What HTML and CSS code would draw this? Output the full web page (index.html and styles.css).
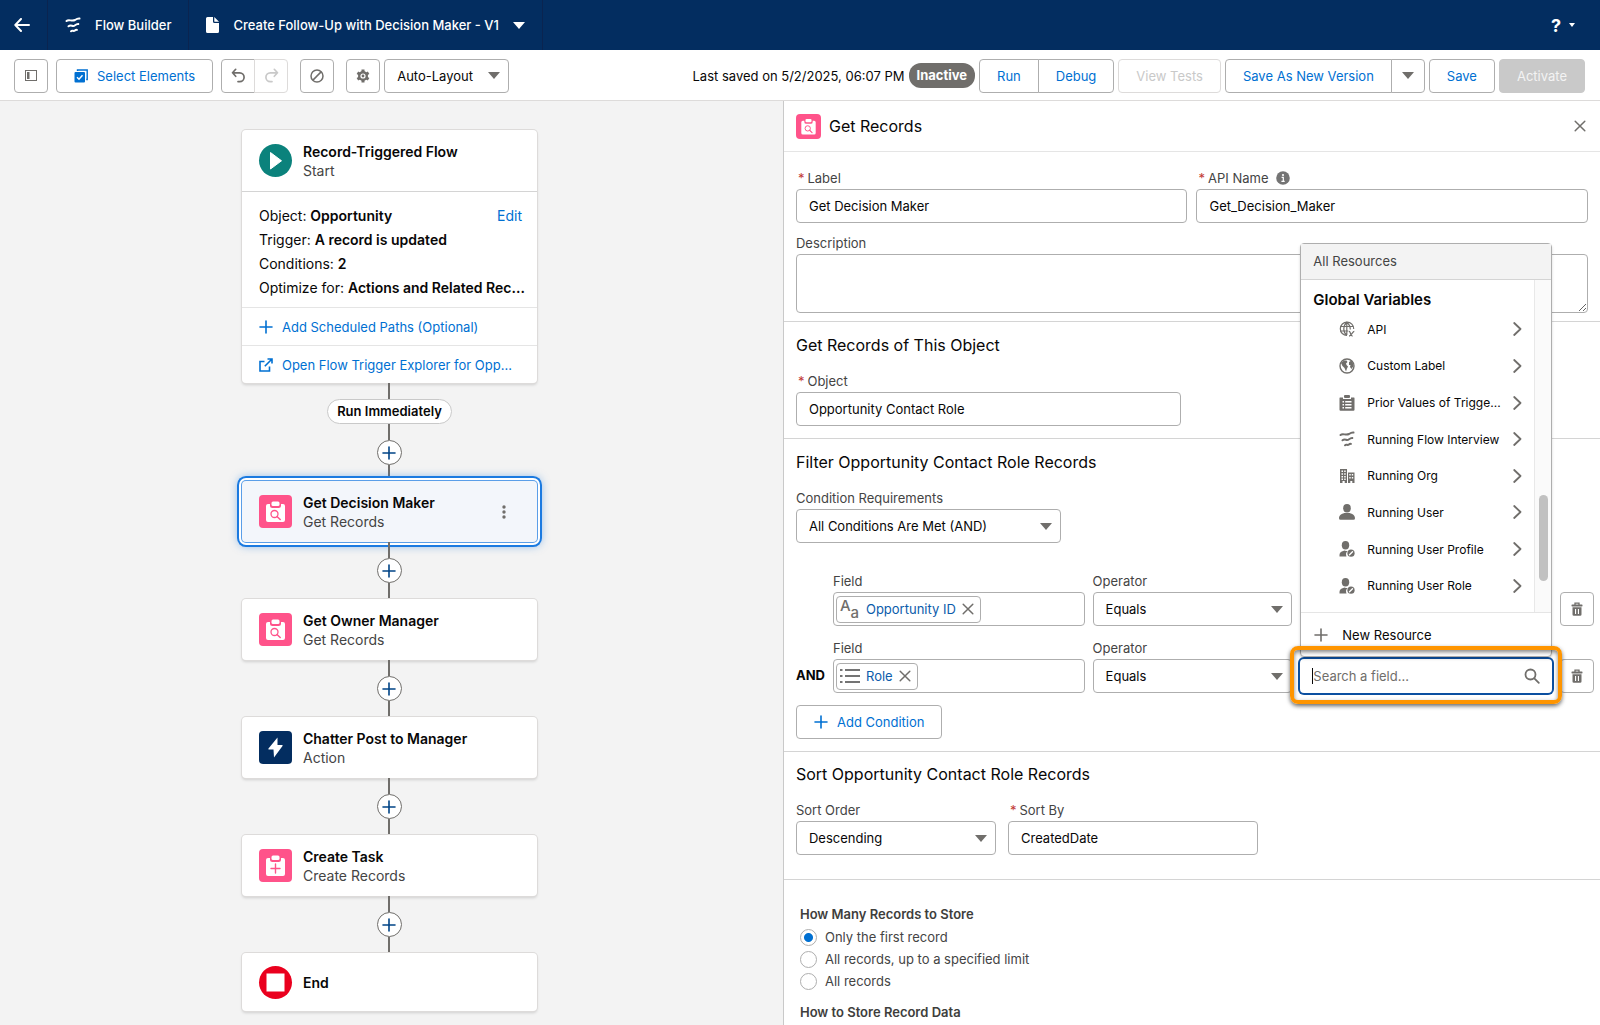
FILE: index.html
```html
<!DOCTYPE html>
<html lang="en">
<head>
  <meta charset="UTF-8">
  <meta name="viewport" content="width=device-width, initial-scale=1">
  <title>Flow Builder</title>
  <link rel="stylesheet" href="styles.css">
</head>
<body>

  <!-- Shared icons -->
  <svg class="sprite" aria-hidden="true">
    <symbol id="i-flow" viewBox="0 0 16 16">
      <g fill="none" stroke="currentColor" stroke-linecap="round" stroke-width="2">
        <path d="M1.500 4C4 1.800 6.500 4.800 10 3C11.500 2 13 1.300 14.500 1.500"/>
        <path d="M3.500 9.300C6 7.300 7.500 9.800 9.500 8.600C11 7.600 12 6.900 13.300 7.100"/>
        <path d="M6 14.300C7.300 12.800 8.500 14.600 9.600 13.700C10.400 13 11 12.700 12 12.900"/>
      </g>
    </symbol>
    <symbol id="i-clip-search" viewBox="0 0 33 33">
      <path fill="#fff" d="M9 9h2v1.500a2.500 2.500 0 0 0 2.500 2.500h6a2.500 2.500 0 0 0 2.500-2.500V9h2a2 2 0 0 1 2 2v14a2 2 0 0 1-2 2H9a2 2 0 0 1-2-2V11a2 2 0 0 1 2-2z"/>
      <rect x="12.500" y="6.500" width="8" height="4.500" rx="1.500" fill="#fff"/>
      <circle cx="15.500" cy="19" r="3.500" fill="none" stroke="#ff538a" stroke-width="1.300"/>
      <path d="M18 21.500l3.200 3" stroke="#ff538a" stroke-width="1.500" stroke-linecap="round"/>
    </symbol>
    <symbol id="i-clip-plus" viewBox="0 0 33 33">
      <path fill="#fff" d="M9 9h2v1.500a2.500 2.500 0 0 0 2.500 2.500h6a2.500 2.500 0 0 0 2.500-2.500V9h2a2 2 0 0 1 2 2v14a2 2 0 0 1-2 2H9a2 2 0 0 1-2-2V11a2 2 0 0 1 2-2z"/>
      <rect x="12.500" y="6.500" width="8" height="4.500" rx="1.500" fill="#fff"/>
      <path d="M16.500 15v9M12 19.500h9" stroke="#ff538a" stroke-width="1.400" stroke-linecap="round"/>
    </symbol>
    <symbol id="i-plus" viewBox="0 0 14 14">
      <path d="M7 1v12M1 7h12" stroke="currentColor" stroke-width="1.600" stroke-linecap="round"/>
    </symbol>
    <symbol id="i-close" viewBox="0 0 12 12">
      <path d="M1.200 1.200l9.600 9.600M10.800 1.200l-9.600 9.600" stroke="currentColor" stroke-width="1.500" stroke-linecap="round"/>
    </symbol>
    <symbol id="i-chevron" viewBox="0 0 9 14">
      <path d="M1.200 1l6.300 6l-6.300 6" fill="none" stroke="currentColor" stroke-width="1.800" stroke-linecap="round" stroke-linejoin="round"/>
    </symbol>
    <symbol id="i-trash" viewBox="0 0 12 14">
      <path d="M4 3V1.200h4V3" fill="none" stroke="currentColor" stroke-width="1.300"/>
      <rect x="0.500" y="2.600" width="11" height="1.800" rx="0.600" fill="currentColor"/>
      <path fill="currentColor" fill-rule="evenodd" d="M1.500 5.300h9v7.200a1.300 1.300 0 0 1-1.300 1.300H2.800a1.300 1.300 0 0 1-1.300-1.300zM4 7v5h1.100V7zM6.900 7v5H8V7z"/>
    </symbol>
    <symbol id="i-user-role" viewBox="0 0 16 16">
      <ellipse cx="6.500" cy="4.300" rx="3.700" ry="4.200" fill="currentColor"/>
      <path fill="currentColor" d="M0.500 15.500v-1.700c0-2.400 2-3.600 5-4.300l1.500 0.500h1.500a5 5 0 0 0-1 5.500z"/>
      <circle cx="12" cy="12.200" r="3.600" fill="currentColor"/>
      <path d="M10.500 13.700l3-3" stroke="#fff" stroke-width="1.400" stroke-linecap="round"/>
    </symbol>
  </svg>

  <header class="topbar">
    <button class="topbar-back" aria-label="Back">
      <svg width="16" height="14" viewBox="0 0 16 14"><path d="M7 1L1.300 7L7 13M1.500 7H15" fill="none" stroke="currentColor" stroke-width="2" stroke-linecap="round" stroke-linejoin="round"/></svg>
    </button>
    <div class="topbar-app">
      <svg width="16" height="16"><use href="#i-flow"/></svg>
      <span>Flow Builder</span>
    </div>
    <button class="topbar-flow">
      <svg width="13" height="16" viewBox="0 0 13 16"><path fill="currentColor" d="M1.500 0H7v4.500A1.500 1.500 0 0 0 8.500 6H13v8.500a1.500 1.500 0 0 1-1.500 1.500h-10A1.500 1.500 0 0 1 0 14.500v-13A1.500 1.500 0 0 1 1.500 0zM8.300 0L13 4.800H8.900a.6.600 0 0 1-.6-.6z"/></svg>
      <span>Create Follow-Up with Decision Maker - V1</span>
      <i class="caret"></i>
    </button>
    <button class="topbar-help" aria-label="Help"><span>?</span><i class="caret caret-small"></i></button>
  </header>

  <div class="toolbar">
    <button class="btn btn-icon" aria-label="Toggle toolbox">
      <svg width="12" height="11" viewBox="0 0 12 11"><rect x="0.500" y="0.500" width="11" height="10" fill="none" stroke="currentColor"/><rect x="2" y="2" width="2.500" height="7" fill="currentColor"/></svg>
    </button>
    <button class="btn btn-select">
      <svg width="14" height="14" viewBox="0 0 14 14"><path d="M3.500 2V1h9.700v9.500h-1" fill="none" stroke="currentColor" stroke-width="1.400"/><rect x="0.500" y="3" width="10.500" height="10.500" rx="1" fill="currentColor"/><path d="M3 8.300l2 2l3.500-4" fill="none" stroke="#fff" stroke-width="1.400"/></svg>
      Select Elements
    </button>
    <div class="btn-group">
      <button class="btn btn-icon" aria-label="Undo">
        <svg width="15" height="15" viewBox="0 0 15 15"><path d="M4.700 1.300L1.500 4.800l3.200 3.500M1.700 4.800h7a4.400 4.400 0 0 1 0 8.800H7" fill="none" stroke="currentColor" stroke-width="1.700" stroke-linecap="round" stroke-linejoin="round"/></svg>
      </button>
      <button class="btn btn-icon" aria-label="Redo" disabled>
        <svg width="15" height="15" viewBox="0 0 15 15"><path d="M10.300 1.300l3.200 3.500l-3.200 3.500M13.300 4.800h-7a4.400 4.400 0 0 0 0 8.800H8" fill="none" stroke="currentColor" stroke-width="1.700" stroke-linecap="round" stroke-linejoin="round"/></svg>
      </button>
    </div>
    <button class="btn btn-icon" aria-label="Errors">
      <svg width="14" height="14" viewBox="0 0 14 14"><circle cx="7" cy="7" r="6" fill="none" stroke="currentColor" stroke-width="1.500"/><path d="M2.900 11.100l8.200-8.200" stroke="currentColor" stroke-width="1.500"/></svg>
    </button>
    <div class="toolbar-layout">
      <button class="btn btn-icon" aria-label="Settings">
        <svg width="14" height="14" viewBox="0 0 14 14"><g stroke="currentColor" stroke-width="3"><path d="M7 .5v13M1.400 3.700l11.200 6.600M1.400 10.300l11.200-6.600"/></g><circle cx="7" cy="7" r="5" fill="currentColor"/><circle cx="7" cy="7" r="2.600" fill="#fff"/><circle cx="7" cy="7" r="1.400" fill="currentColor"/></svg>
      </button>
      <div class="select-wrap layout-select">
        <select aria-label="Layout"><option>Auto-Layout</option></select>
        <i class="caret"></i>
      </div>
    </div>

    <div class="toolbar-right">
      <span class="saved">Last saved on 5/2/2025, 06:07 PM</span>
      <span class="status">Inactive</span>
      <div class="btn-group">
        <button class="btn btn-text">Run</button>
        <button class="btn btn-text">Debug</button>
      </div>
      <button class="btn btn-text" disabled>View Tests</button>
      <div class="btn-group">
        <button class="btn btn-text">Save As New Version</button>
        <button class="btn btn-icon" aria-label="More save options"><i class="caret"></i></button>
      </div>
      <button class="btn btn-text">Save</button>
      <button class="btn btn-text btn-activate" disabled>Activate</button>
    </div>
  </div>

  <main class="workspace">

    <!-- Flow canvas -->
    <section class="canvas">
      <article class="node">
        <div class="node-head">
          <span class="node-icon start"><svg width="33" height="33" viewBox="0 0 33 33"><path d="M11.500 8.500v16.500l11-8.200z" fill="#fff" stroke="#fff" stroke-linejoin="round"/></svg></span>
          <div><h3>Record-Triggered Flow</h3><p>Start</p></div>
        </div>
        <div class="node-details">
          <a href="#">Edit</a>
          <p>Object: <b>Opportunity</b></p>
          <p>Trigger: <b>A record is updated</b></p>
          <p>Conditions: <b>2</b></p>
          <p>Optimize for: <b>Actions and Related Rec...</b></p>
        </div>
        <a class="node-link" href="#"><svg width="14" height="14"><use href="#i-plus"/></svg><span>Add Scheduled Paths (Optional)</span></a>
        <a class="node-link" href="#"><svg width="14" height="14" viewBox="0 0 14 14"><path d="M5.500 3.500H1v9.500h9.500V8.500M8.500 1H13v4.500M12.500 1.500L5.800 8.200" fill="none" stroke="currentColor" stroke-width="1.600"/></svg><span>Open Flow Trigger Explorer for Opp...</span></a>
      </article>
      <i class="line"></i>
      <span class="path-label">Run Immediately</span>
      <i class="line"></i>
      <button class="add" aria-label="Add element"><svg width="14" height="14"><use href="#i-plus"/></svg></button>
      <i class="line"></i>
      <article class="node selected">
        <div class="node-head">
          <span class="node-icon records"><svg width="33" height="33"><use href="#i-clip-search"/></svg></span>
          <div><h3>Get Decision Maker</h3><p>Get Records</p></div>
          <button class="node-menu" aria-label="Element actions"><svg width="4" height="14" viewBox="0 0 4 14"><g fill="currentColor"><circle cx="2" cy="2" r="1.700"/><circle cx="2" cy="7" r="1.700"/><circle cx="2" cy="12" r="1.700"/></g></svg></button>
        </div>
      </article>
      <i class="line"></i>
      <button class="add" aria-label="Add element"><svg width="14" height="14"><use href="#i-plus"/></svg></button>
      <i class="line"></i>
      <article class="node">
        <div class="node-head">
          <span class="node-icon records"><svg width="33" height="33"><use href="#i-clip-search"/></svg></span>
          <div><h3>Get Owner Manager</h3><p>Get Records</p></div>
        </div>
      </article>
      <i class="line"></i>
      <button class="add" aria-label="Add element"><svg width="14" height="14"><use href="#i-plus"/></svg></button>
      <i class="line"></i>
      <article class="node">
        <div class="node-head">
          <span class="node-icon action"><svg width="33" height="33" viewBox="0 0 33 33"><path fill="#fff" d="M18.500 6.500L9.500 17.500a.6.600 0 0 0 .5 1h4.500L15 26.500l8.500-11.500a.6.600 0 0 0-.5-1h-4.500z"/></svg></span>
          <div><h3>Chatter Post to Manager</h3><p>Action</p></div>
        </div>
      </article>
      <i class="line"></i>
      <button class="add" aria-label="Add element"><svg width="14" height="14"><use href="#i-plus"/></svg></button>
      <i class="line"></i>
      <article class="node">
        <div class="node-head">
          <span class="node-icon records"><svg width="33" height="33"><use href="#i-clip-plus"/></svg></span>
          <div><h3>Create Task</h3><p>Create Records</p></div>
        </div>
      </article>
      <i class="line"></i>
      <button class="add" aria-label="Add element"><svg width="14" height="14"><use href="#i-plus"/></svg></button>
      <i class="line"></i>
      <article class="node node-end">
        <div class="node-head">
          <span class="node-icon end"><svg width="33" height="33" viewBox="0 0 33 33"><rect x="7.500" y="7.500" width="18" height="18" fill="#fff"/></svg></span>
          <div><h3>End</h3></div>
        </div>
      </article>
    </section>

    <!-- Properties panel -->
    <aside class="panel">
      <div class="panel-head">
        <span class="node-icon records"><svg width="25" height="25"><use href="#i-clip-search"/></svg></span>
        <h2>Get Records</h2>
        <button class="plain" aria-label="Close"><svg width="12" height="12"><use href="#i-close"/></svg></button>
      </div>

      <section class="block block-basic">
        <div class="two-cols">
          <div class="field">
            <label for="label"><em>*</em>Label</label>
            <input id="label" type="text" value="Get Decision Maker">
          </div>
          <div class="field">
            <label for="api"><em>*</em>API Name
              <svg class="info" width="14" height="14" viewBox="0 0 14 14"><circle cx="7" cy="7" r="6.800" fill="#747474"/><circle cx="7" cy="4" r="1.100" fill="#fff"/><path d="M5.600 6.300h1.700v4M5.400 10.300h3.300" fill="none" stroke="#fff" stroke-width="1.200"/></svg>
            </label>
            <input id="api" type="text" value="Get_Decision_Maker">
          </div>
        </div>
        <div class="field">
          <label for="description">Description</label>
          <textarea id="description"></textarea>
        </div>
      </section>

      <section class="block">
        <h2>Get Records of This Object</h2>
        <div class="field w-object">
          <label for="object"><em>*</em>Object</label>
          <input id="object" type="text" value="Opportunity Contact Role">
        </div>
      </section>

      <section class="block block-filter">
        <h2>Filter Opportunity Contact Role Records</h2>
        <div class="field w-requirements">
          <label for="requirements">Condition Requirements</label>
          <div class="select-wrap">
            <select id="requirements"><option>All Conditions Are Met (AND)</option></select>
            <i class="caret"></i>
          </div>
        </div>

        <div class="conditions">
          <div class="condition">
            <span></span>
            <div class="field">
              <label for="field1">Field</label>
              <div class="lookup">
                <span class="pill">
                  <span class="text-type"><b>A</b><i>a</i></span>
                  <a href="#">Opportunity ID</a>
                  <button class="plain" aria-label="Remove Opportunity ID"><svg width="12" height="12"><use href="#i-close"/></svg></button>
                </span>
                <input id="field1" type="text">
              </div>
            </div>
            <div class="field">
              <label for="op1">Operator</label>
              <div class="select-wrap">
                <select id="op1"><option>Equals</option></select>
                <i class="caret"></i>
              </div>
            </div>
            <div class="value"><input type="text" aria-label="Value"></div>
            <button class="btn btn-icon" aria-label="Delete condition"><svg width="12" height="14"><use href="#i-trash"/></svg></button>
          </div>

          <div class="condition">
            <span class="logic">AND</span>
            <div class="field">
              <label for="field2">Field</label>
              <div class="lookup">
                <span class="pill">
                  <svg width="20" height="16" viewBox="0 0 20 16"><path d="M0 2h2.500M0 8h2.500M0 14h2.500M5 2h15M5 8h15M5 14h15" stroke="#747474" stroke-width="1.800"/></svg>
                  <a href="#">Role</a>
                  <button class="plain" aria-label="Remove Role"><svg width="12" height="12"><use href="#i-close"/></svg></button>
                </span>
                <input id="field2" type="text">
              </div>
            </div>
            <div class="field">
              <label for="op2">Operator</label>
              <div class="select-wrap">
                <select id="op2"><option>Equals</option></select>
                <i class="caret"></i>
              </div>
            </div>
            <div class="value value-active">
              <div class="search">
                <i class="cursor"></i>
                <input type="text" placeholder="Search a field..." aria-label="Value">
                <svg width="16" height="16" viewBox="0 0 16 16"><circle cx="6.500" cy="6.500" r="5" fill="none" stroke="currentColor" stroke-width="1.800"/><path d="M10.300 10.300l4.500 4.500" stroke="currentColor" stroke-width="1.800" stroke-linecap="round"/></svg>
              </div>

              <!-- Resource picker -->
              <div class="picker">
                <div class="picker-head">All Resources</div>
                <div class="picker-body">
                  <div class="picker-list">
                    <h4>Global Variables</h4>
                    <ul>
                      <li><svg width="16" height="16" viewBox="0 0 16 16"><g fill="none" stroke="currentColor" stroke-width="1.200"><path d="M8 14.500A6.700 6.700 0 1 1 14.700 8"/><path d="M7.800 14.500C3.800 11 3.800 5 7.800 1.200C10.500 3.500 11.400 6 11.300 8.500M7.800 1.200V14M1.500 5.500h12.600M1.200 10h8"/><path d="M9.800 10.500c1.800-.8 1.600 4.600 3.800 4.600M15.300 10.300c-1.500 0-3.500 4.800-5.300 4.800"/></g></svg><span>API</span><svg width="9" height="14"><use href="#i-chevron"/></svg></li>
                      <li><svg width="16" height="16" viewBox="0 0 16 16"><circle cx="8" cy="8" r="7" fill="none" stroke="currentColor" stroke-width="1.400"/><path fill="currentColor" d="M2 5l3-2.500 2.500 0L8.500 4 7 5.500l.5 1.500L9 8.500 8 10.500l-1 3-1.500-3.500L3.500 8zM10 4l2.500-1.500L14 5.500l.5 2.500-2 3-1.500-2 .5-2H10z"/></svg><span>Custom Label</span><svg width="9" height="14"><use href="#i-chevron"/></svg></li>
                      <li><svg width="16" height="16" viewBox="0 0 16 16"><rect x="5" y="0" width="6" height="3" rx="1" fill="currentColor"/><path fill="currentColor" fill-rule="evenodd" d="M1 2.500h3V4h8V2.500h3a.8.800 0 0 1 .5.800v11.500a1 1 0 0 1-1 1h-13a1 1 0 0 1-1-1V3.300a.8.800 0 0 1 .5-.8zM3.500 6v1.500H5V6zM6.200 6v1.500h6.300V6zM3.500 9v1.500H5V9zM6.200 9v1.500h6.300V9zM3.500 12v1.500H5V12zM6.200 12v1.500h6.300V12z"/></svg><span>Prior Values of Trigge...</span><svg width="9" height="14"><use href="#i-chevron"/></svg></li>
                      <li><svg width="16" height="16"><use href="#i-flow"/></svg><span>Running Flow Interview</span><svg width="9" height="14"><use href="#i-chevron"/></svg></li>
                      <li><svg width="16" height="16" viewBox="0 0 16 16"><path fill="currentColor" fill-rule="evenodd" d="M1 1h7v14H5.700v-2H3.500v2H1zM2.500 2.500v1.500H4V2.500zM5.200 2.500v1.500h1.500V2.500zM2.500 5.200v1.500H4V5.200zM5.200 5.200v1.500h1.500V5.200zM2.500 8v1.500H4V8zM5.200 8v1.500h1.500V8zM2.500 10.600v1.300H4v-1.300zM5.200 10.600v1.300h1.500v-1.300zM9 4.500h6.500V15H13.300v-2h-2v2H9zM10.300 6v1.500h1.400V6zM12.800 6v1.500h1.400V6zM10.300 9v1.500h1.400V9zM12.800 9v1.500h1.400V9z"/></svg><span>Running Org</span><svg width="9" height="14"><use href="#i-chevron"/></svg></li>
                      <li><svg width="16" height="16" viewBox="0 0 16 16"><ellipse cx="8" cy="4.300" rx="3.800" ry="4.200" fill="currentColor"/><path fill="currentColor" d="M0 14.200c0-3 2.500-4.200 5.200-5.200h5.600c2.700 1 5.200 2.200 5.200 5.200a1.500 1.500 0 0 1-1.500 1.500h-13A1.500 1.500 0 0 1 0 14.200z"/></svg><span>Running User</span><svg width="9" height="14"><use href="#i-chevron"/></svg></li>
                      <li><svg width="16" height="16"><use href="#i-user-role"/></svg><span>Running User Profile</span><svg width="9" height="14"><use href="#i-chevron"/></svg></li>
                      <li><svg width="16" height="16"><use href="#i-user-role"/></svg><span>Running User Role</span><svg width="9" height="14"><use href="#i-chevron"/></svg></li>
                    </ul>
                  </div>
                  <div class="picker-scroll"><i></i></div>
                </div>
                <button class="picker-new"><svg width="14" height="14"><use href="#i-plus"/></svg>New Resource</button>
              </div>
            </div>
            <button class="btn btn-icon" aria-label="Delete condition"><svg width="12" height="14"><use href="#i-trash"/></svg></button>
          </div>
        </div>

        <button class="btn btn-add"><svg width="14" height="14"><use href="#i-plus"/></svg>Add Condition</button>
      </section>

      <section class="block block-sort">
        <h2>Sort Opportunity Contact Role Records</h2>
        <div class="sort-row">
          <div class="field">
            <label for="order">Sort Order</label>
            <div class="select-wrap">
              <select id="order"><option>Descending</option></select>
              <i class="caret"></i>
            </div>
          </div>
          <div class="field">
            <label for="sortby"><em>*</em>Sort By</label>
            <input id="sortby" type="text" value="CreatedDate">
          </div>
        </div>
      </section>

      <section class="block block-store">
        <h5>How Many Records to Store</h5>
        <label class="radio"><input type="radio" name="count" checked>Only the first record</label>
        <label class="radio"><input type="radio" name="count">All records, up to a specified limit</label>
        <label class="radio"><input type="radio" name="count">All records</label>
        <h5>How to Store Record Data</h5>
      </section>
    </aside>
  </main>

</body>
</html>
```

FILE: styles.css
```css
* {
  box-sizing: border-box;
}
body {
  margin: 0;
  height: 100vh;
  display: flex;
  flex-direction: column;
  overflow: hidden;
  font-family: Inter, "Liberation Sans", sans-serif;
  font-size: 13px;
  color: #080707;
  background: #fff;
}
h2, h3, h4, h5, p, ul {
  margin: 0;
  padding: 0;
}
h2 {
  font-size: 16px;
  font-weight: 400;
  line-height: 24px;
}
button, input, select, textarea {
  font: inherit;
  color: inherit;
}
button {
  cursor: pointer;
}
a {
  color: #0070d2;
  text-decoration: none;
}
svg {
  display: block;
  flex: none;
}
.sprite {
  position: absolute;
  width: 0;
  height: 0;
}
.caret {
  border: 6px solid transparent;
  border-top: 7px solid currentColor;
  border-bottom: 0;
}
.caret-small {
  border-width: 4px 3px 0;
}
.plain {
  display: flex;
  padding: 0;
  border: 0;
  background: none;
  color: #706e6b;
}

/* Top bar */
.topbar {
  display: flex;
  height: 50px;
  flex: none;
  background: #032d60;
  color: #fff;
  font-weight: 500;
}
.topbar > * {
  display: flex;
  align-items: center;
  gap: 14px;
  padding: 0 17px;
  border: 0;
  border-right: 1px solid #0a2450;
  background: none;
}
.topbar .topbar-back {
  width: 48px;
  padding: 0 14px;
}
.topbar .topbar-help {
  margin-left: auto;
  padding-right: 25px;
  gap: 8px;
  border: 0;
  font-size: 18px;
  font-weight: 700;
}

/* Toolbar */
.toolbar {
  display: flex;
  flex: none;
  align-items: center;
  gap: 8px;
  height: 51px;
  padding: 1px 15px 0 14px;
  border-bottom: 1px solid #dddbda;
}
.toolbar .btn-group + .btn-icon,
.toolbar-layout {
  margin-left: 4px;
}
.toolbar-layout,
.toolbar-right {
  display: flex;
  align-items: center;
  gap: 4px;
}
.toolbar-right {
  margin-left: auto;
}
.btn {
  display: flex;
  align-items: center;
  justify-content: center;
  height: 34px;
  padding: 0;
  border: 1px solid #aeaeae;
  border-radius: 4px;
  background: #fff;
  color: #0070d2;
}
.btn:disabled {
  color: #c9c9c9;
  border-color: #dddbda;
}
.btn-icon {
  width: 34px;
  color: #706e6b;
}
.btn-text {
  padding: 0 17px;
}
.btn-select {
  gap: 9px;
  padding: 0 17px;
}
.btn-group {
  display: flex;
}
.btn-group .btn:first-child {
  border-radius: 4px 0 0 4px;
}
.btn-group .btn:last-child {
  margin-left: -1px;
  border-radius: 0 4px 4px 0;
}
.toolbar .btn-activate {
  background: #c9c9c9;
  border-color: #c9c9c9;
  color: #f3f3f3;
}
.layout-select {
  width: 125px;
}
.status {
  padding: 0 8px;
  border-radius: 12px;
  background: #706e6b;
  color: #fff;
  font-weight: 700;
  line-height: 25px;
}

/* Form controls */
input[type="text"], select, textarea, .lookup {
  display: block;
  width: 100%;
  height: 34px;
  padding: 0 12px;
  border: 1px solid #aeaeae;
  border-radius: 4px;
  background: #fff;
  outline: 0;
}
textarea {
  height: 59px;
}
.select-wrap {
  display: grid;
  align-items: center;
}
.select-wrap > * {
  grid-area: 1 / 1;
}
.select-wrap select {
  appearance: none;
}
.select-wrap .caret {
  justify-self: end;
  margin-right: 9px;
  color: #706e6b;
  pointer-events: none;
}
.field label {
  display: flex;
  align-items: center;
  height: 22px;
  color: #444;
}
.field em {
  padding: 0 3px 0 2px;
  color: #c23934;
  font-style: normal;
}
.info {
  margin-left: 8px;
}

/* Canvas */
.workspace {
  display: flex;
  flex: 1;
  min-height: 0;
}
.canvas {
  display: flex;
  flex: 21;
  flex-direction: column;
  align-items: center;
  min-width: 0;
  padding: 29px 4px 0 0;
  overflow: hidden;
  background: #f3f3f3;
  font-size: 14px;
}
.canvas > * {
  flex: none;
}
.node {
  width: 295px;
  border-radius: 4px;
  background: #fff;
  box-shadow: 0 0 0 1px #dddbda, 0 2px 3px rgba(0, 0, 0, 0.15);
}
.node.selected {
  background: #f3f6fb;
  box-shadow: 0 0 0 1px #5a9ee8, 0 0 0 3px #fff, 0 0 0 5px #1b7ae0, 0 0 8px 4px rgba(27, 122, 224, 0.5);
}
.node-head {
  display: flex;
  align-items: center;
  gap: 11px;
  height: 61px;
  padding: 0 31px 0 17px;
}
.node-end .node-head {
  height: 58px;
}
.node-head h3 {
  font-size: 14px;
  font-weight: 600;
  line-height: 19px;
}
.node-head p {
  color: #444;
  line-height: 19px;
}
.node-icon {
  border-radius: 4px;
  overflow: hidden;
}
.start {
  border-radius: 50%;
  background: #0b827c;
}
.end {
  border-radius: 50%;
  background: #ea001e;
}
.records {
  background: #ff538a;
}
.action {
  background: #032d60;
}
.node-menu {
  margin-left: auto;
  padding: 0;
  border: 0;
  background: none;
  color: #706e6b;
}
.node-details {
  padding: 12px 15px 7px 17px;
  border-top: 1px solid #d4d4d4;
  line-height: 24px;
  white-space: nowrap;
}
.node-details a {
  float: right;
}
.node-details b {
  font-weight: 600;
}
.node-link {
  display: flex;
  align-items: center;
  gap: 9px;
  height: 38px;
  padding: 0 17px;
  border-top: 1px solid #e5e5e5;
  font-size: 13px;
}
.line {
  width: 2px;
  height: 16px;
  background: #706e6b;
}
.path-label {
  padding: 0 9px;
  border: 1px solid #c9c9c9;
  border-radius: 13px;
  background: #fff;
  font-size: 13px;
  font-weight: 600;
  line-height: 23px;
}
.add {
  display: flex;
  align-items: center;
  justify-content: center;
  width: 25px;
  height: 25px;
  padding: 0;
  border: 1px solid #706e6b;
  border-radius: 50%;
  background: #fff;
  color: #014486;
}

/* Panel */
.panel {
  flex: 22;
  min-width: 0;
  overflow: hidden;
  border-left: 1px solid #c9c9c9;
}
.panel-head {
  display: flex;
  align-items: center;
  gap: 8px;
  height: 51px;
  padding: 0 14px 0 12px;
  border-bottom: 1px solid #e5e5e5;
}
.panel-head .plain {
  margin-left: auto;
}
.block {
  padding: 11px 12px 12px;
  border-bottom: 1px solid #d4d4d4;
}
.block-basic {
  display: grid;
  gap: 9px;
  padding-top: 15px;
  padding-bottom: 8px;
}
.two-cols {
  display: grid;
  grid-template-columns: 1fr 1fr;
  gap: 9px;
}
.block h2 + * {
  margin-top: 13px;
}
.w-object {
  width: 385px;
}
.w-requirements {
  width: 265px;
}
.block-filter {
  padding-right: 6px;
}
.conditions {
  display: grid;
  gap: 11px;
  margin: 27px 0 12px;
}
.condition {
  display: grid;
  grid-template-columns: 29px 252fr 200fr 252fr 34px;
  gap: 8px;
  align-items: end;
}
.logic {
  font-weight: 700;
  line-height: 36px;
}
.lookup {
  display: flex;
  align-items: center;
  padding: 0 2px;
}
.lookup input[type="text"] {
  flex: 1;
  width: 0;
  height: 30px;
  border: 0;
}
.pill {
  display: flex;
  align-items: center;
  gap: 6px;
  height: 27px;
  padding: 0 6px 0 3px;
  border: 1px solid #aeaeae;
  border-radius: 4px;
}
.pill a {
  color: #0b5cab;
}
/* Text data type, a raised A and a lowered a */
.text-type {
  display: flex;
  width: 20px;
  color: #706e6b;
  font-size: 15px;
  line-height: 18px;
}
.text-type b {
  padding-bottom: 7px;
  font-weight: 500;
}
.text-type i {
  padding-top: 7px;
  font-style: normal;
  font-weight: 500;
}
.btn-add {
  gap: 9px;
  padding: 0 17px;
}
.value {
  position: relative;
}
/* Highlight around the active search box */
.value-active::after {
  content: "";
  position: absolute;
  inset: -13px -10px -11px;
  border: 4px solid #ff9500;
  border-radius: 8px;
  box-shadow: 0 2px 4px rgba(0, 0, 0, 0.6), inset 0 2px 4px rgba(0, 0, 0, 0.5);
  pointer-events: none;
}
.search {
  display: flex;
  align-items: center;
  height: 34px;
  padding: 0 12px;
  border-radius: 4px;
  background: #fff;
  box-shadow: 0 0 0 2px #0b4fa0;
  color: #706e6b;
}
.search input[type="text"] {
  flex: 1;
  width: 0;
  padding: 0;
  border: 0;
}
.search input::placeholder {
  color: #706e6b;
}
.cursor {
  width: 1px;
  height: 16px;
  background: #080707;
}

/* Resource picker */
.picker {
  position: absolute;
  left: 0;
  right: 0;
  bottom: calc(100% + 2px);
  border: 1px solid #aeaeae;
  border-radius: 4px;
  background: #fff;
  box-shadow: 0 2px 3px rgba(0, 0, 0, 0.16);
}
.picker-head {
  padding-left: 12px;
  border-bottom: 1px solid #d4d4d4;
  background: #f3f3f3;
  color: #444;
  line-height: 35px;
}
.picker-body {
  display: flex;
}
.picker-list {
  flex: 1;
  min-width: 0;
}
.picker-list h4 {
  padding: 9px 12px 0;
  font-size: 15px;
  font-weight: 600;
  line-height: 22px;
}
.picker-list ul {
  display: grid;
  grid-auto-rows: 1fr;
  height: 293px;
  margin-bottom: 8px;
  list-style: none;
  font-size: 12px;
}
.picker-list li {
  display: flex;
  align-items: center;
  gap: 12px;
  padding: 0 12px 0 38px;
}
.picker-list li span {
  flex: 1;
  white-space: nowrap;
}
.picker-list svg {
  color: #706e6b;
}
.picker-list span + svg {
  margin-left: -12px;
}
.picker-scroll {
  width: 17px;
  padding: 215px 3px 0 4px;
  border-left: 1px solid #e8e8e8;
  background: #fafafa;
}
.picker-scroll i {
  display: block;
  height: 86px;
  border-radius: 5px;
  background: #c1c1c1;
}
.picker-new {
  display: flex;
  align-items: center;
  gap: 14px;
  width: 100%;
  height: 44px;
  padding: 0 13px;
  border: 0;
  border-top: 1px solid #e5e5e5;
  background: none;
}
.picker-new svg {
  color: #706e6b;
}

.sort-row {
  display: grid;
  grid-template-columns: 200px 250px;
  gap: 12px;
}
.block-sort {
  padding-top: 10px;
  padding-bottom: 24px;
}
.block-store {
  padding: 24px 16px;
  border: 0;
}
.block-store h5 {
  margin-bottom: 2px;
  font-size: 13px;
  font-weight: 600;
  line-height: 20px;
  color: #3e3e3c;
}
.block-store .radio + h5 {
  margin-top: 10px;
}
.radio {
  display: flex;
  align-items: center;
  gap: 8px;
  height: 22px;
  color: #444;
}
.radio input {
  appearance: none;
  width: 17px;
  height: 17px;
  margin: 0;
  border: 1px solid #aeaeae;
  border-radius: 50%;
  background: #fff;
}
.radio input:checked {
  background: radial-gradient(#0070d2 4px, #fff 5px);
}
```
